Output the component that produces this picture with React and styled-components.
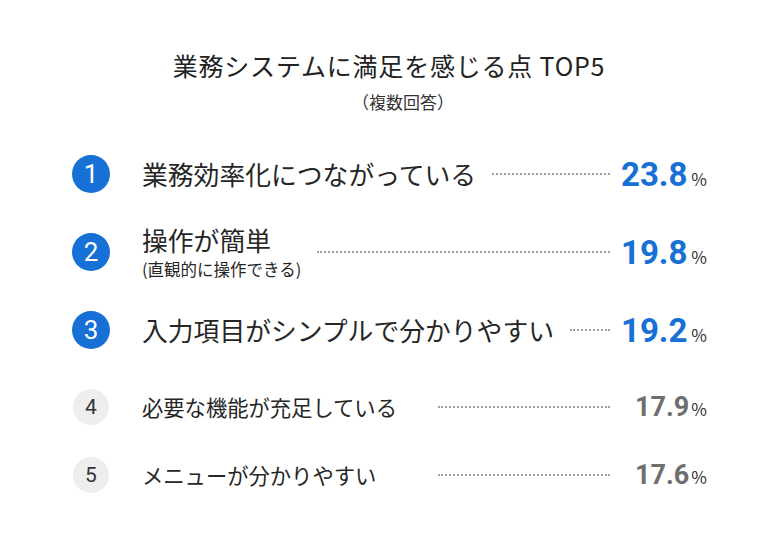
import React from "react";
import styled, { createGlobalStyle } from "styled-components";

const Global = createGlobalStyle`
  html, body { margin: 0; padding: 0; background: #ffffff; }
  body { font-family: "Noto Sans CJK JP", "Noto Sans", sans-serif; color: #262626; }
`;

const Page = styled.div`
  width: 778px;
  height: 538px;
  box-sizing: border-box;
  padding-top: 48px;
  display: flex;
  flex-direction: column;
  align-items: center;
  overflow: hidden;
`;

const Title = styled.h1`
  margin: 0;
  font-size: 25px;
  line-height: 34px;
  font-weight: 400;
  letter-spacing: 0.8px;
  color: #222;
`;

const Sub = styled.div`
  margin: 8px 0 0 28px;
  font-size: 17px;
  line-height: 24px;
  color: #333;
`;

const List = styled.div`
  margin-top: 21px;
  align-self: flex-start;
  margin-left: 72px;
  width: 635px;
  display: flex;
  flex-direction: column;
`;

const SmallGroup = styled.div`
  display: flex;
  flex-direction: column;
  margin-top: 4px;
`;

const Row = styled.div`
  display: flex;
  align-items: center;
  height: ${(p) => (p.$top ? 78 : 68)}px;
`;

const BadgeCell = styled.div`
  width: 38px;
  flex: none;
  display: flex;
  justify-content: center;
  margin-right: 32px;
`;

const Badge = styled.div`
  width: ${(p) => (p.$top ? 38 : 36)}px;
  height: ${(p) => (p.$top ? 38 : 36)}px;
  border-radius: 50%;
  background: ${(p) => (p.$top ? "#1670d5" : "#eeeeee")};
  color: ${(p) => (p.$top ? "#ffffff" : "#333333")};
  font-family: Roboto, "Noto Sans", sans-serif;
  font-size: ${(p) => (p.$top ? 26 : 21)}px;
  display: flex;
  align-items: center;
  justify-content: center;
`;

const Label = styled.div`
  display: flex;
  flex-direction: column;
  min-width: ${(p) => (p.$top ? 0 : 280)}px;
`;

const Main = styled.span`
  font-size: ${(p) => (p.$top ? 25.8 : 21.3)}px;
  line-height: ${(p) => (p.$top ? 30 : 28)}px;
  white-space: nowrap;
  color: #262626;
`;

const Note = styled.span`
  font-size: 16.5px;
  line-height: 20px;
  margin-top: 4px;
  color: #262626;
  white-space: nowrap;
`;

const Dots = styled.div`
  flex: 1;
  height: 0;
  border-top: 2px dotted #a0a0a0;
  margin: 0 13px 0 16px;
`;

const Value = styled.div`
  width: 84px;
  flex: none;
  display: flex;
  align-items: baseline;
  justify-content: flex-end;
  font-family: Roboto, "Noto Sans", sans-serif;
`;

const Num = styled.span`
  font-size: ${(p) => (p.$top ? 33 : 27)}px;
  font-weight: 700;
  color: ${(p) => (p.$top ? "#1670d5" : "#6e6e6e")};
`;

const Pct = styled.span`
  font-family: "Noto Sans CJK JP", sans-serif;
  font-size: 17px;
  margin-left: ${(p) => (p.$top ? 4 : 2)}px;
  color: #333;
`;

const items = [
  { rank: 1, label: "業務効率化につながっている", value: "23.8", top: true },
  { rank: 2, label: "操作が簡単", note: "(直観的に操作できる)", value: "19.8", top: true },
  { rank: 3, label: "入力項目がシンプルで分かりやすい", value: "19.2", top: true },
  { rank: 4, label: "必要な機能が充足している", value: "17.9", top: false },
  { rank: 5, label: "メニューが分かりやすい", value: "17.6", top: false },
];

function Item({ it }) {
  return (
    <Row $top={it.top}>
      <BadgeCell>
        <Badge $top={it.top}>{it.rank}</Badge>
      </BadgeCell>
      <Label $top={it.top}>
        <Main $top={it.top}>{it.label}</Main>
        {it.note && <Note>{it.note}</Note>}
      </Label>
      <Dots />
      <Value>
        <Num $top={it.top}>{it.value}</Num>
        <Pct $top={it.top}>%</Pct>
      </Value>
    </Row>
  );
}

export default function App() {
  return (
    <>
      <Global />
      <Page>
        <Title>業務システムに満足を感じる点 TOP5</Title>
        <Sub>（複数回答）</Sub>
        <List>
          {items.filter((i) => i.top).map((it) => (
            <Item key={it.rank} it={it} />
          ))}
          <SmallGroup>
            {items.filter((i) => !i.top).map((it) => (
              <Item key={it.rank} it={it} />
            ))}
          </SmallGroup>
        </List>
      </Page>
    </>
  );
}
